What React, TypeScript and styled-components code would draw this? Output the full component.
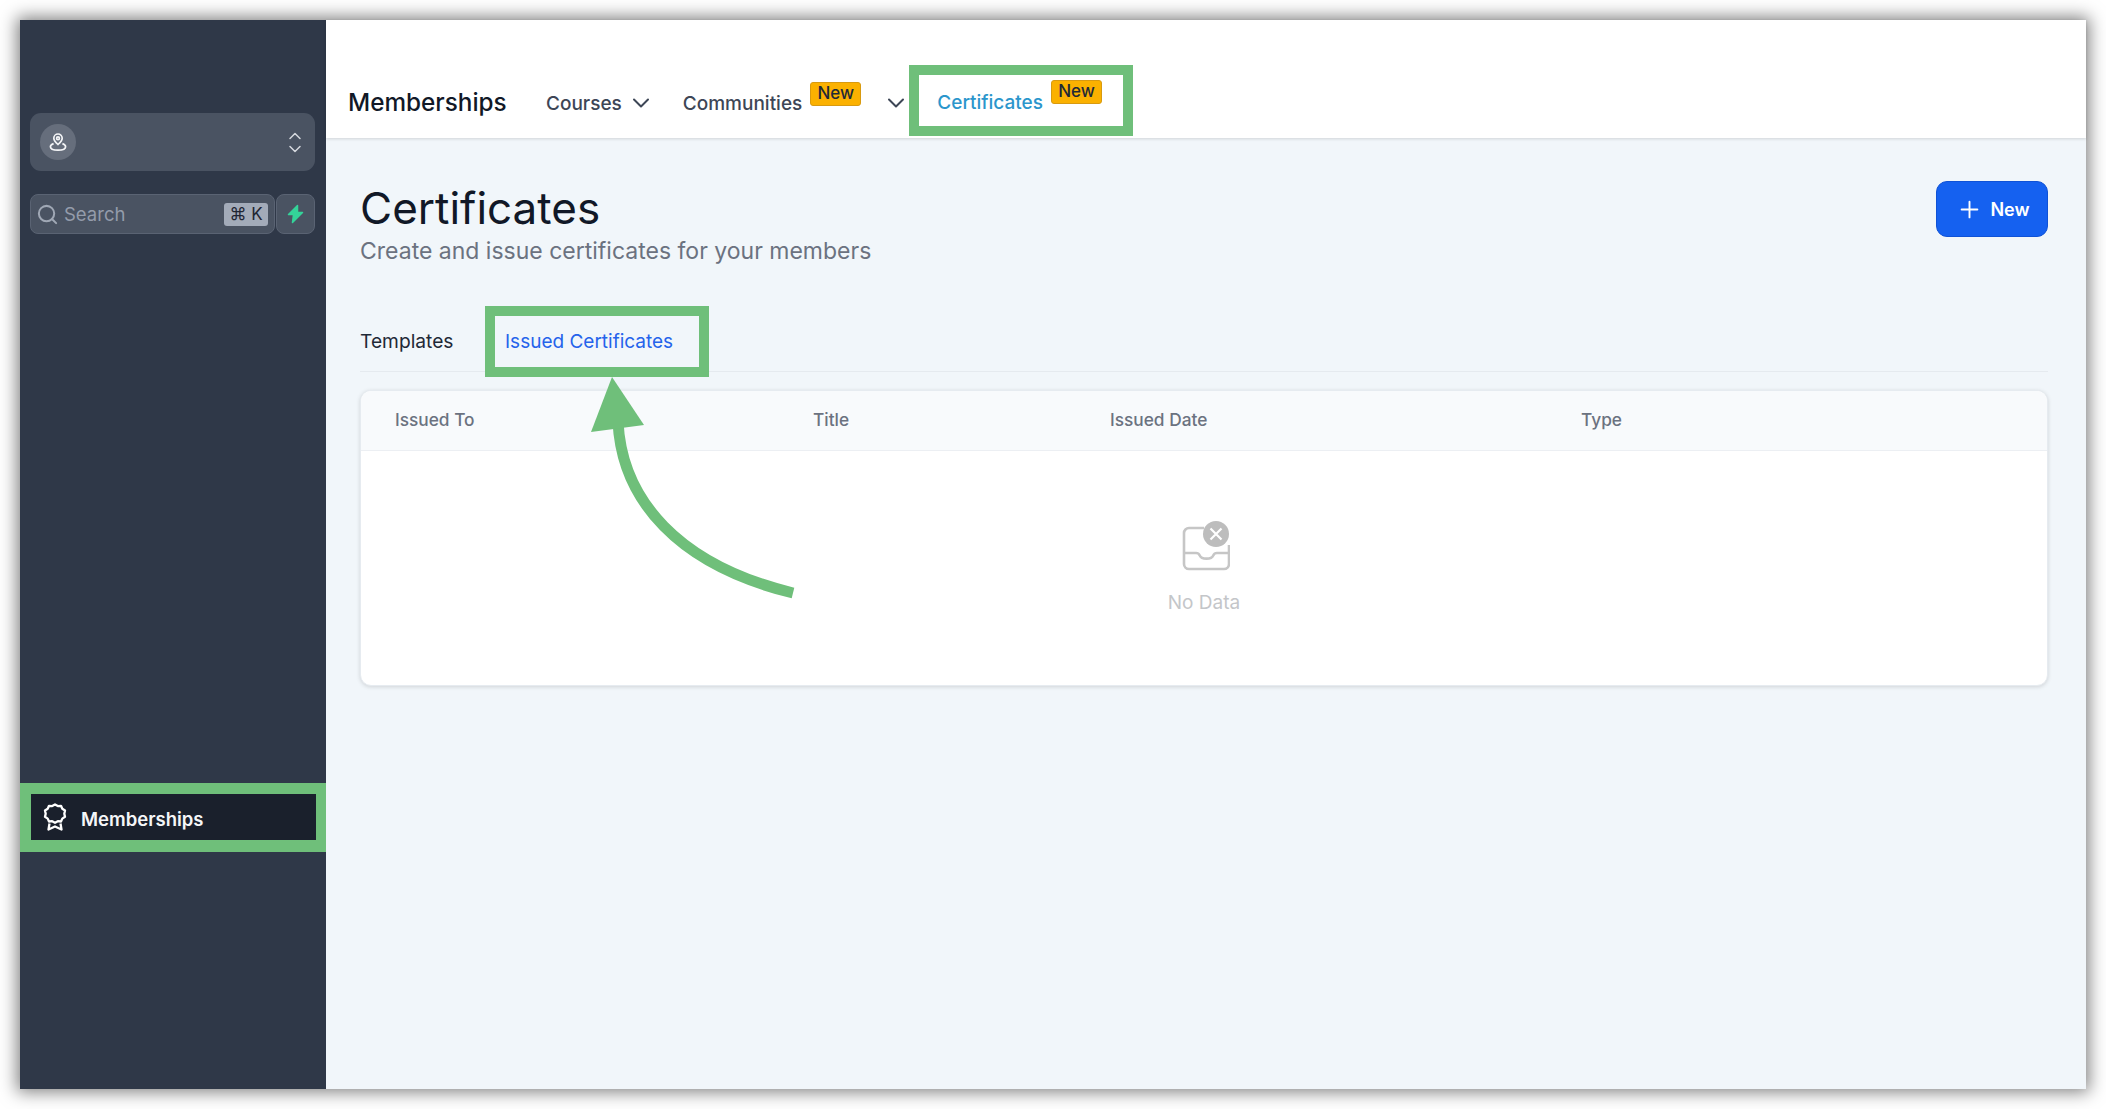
import React from 'react';
import styled, { createGlobalStyle } from 'styled-components';
import { ChevronDown, ChevronUp, Plus, Search } from 'lucide-react';

const GREEN = '#6fbf7a';

const GlobalStyle = createGlobalStyle`
  html, body {
    margin: 0;
    background: #ffffff;
    font-family: Inter, "Liberation Sans", sans-serif;
  }
  * {
    box-sizing: border-box;
  }
`;

const App = () => {
  return (
    <Screen>
      <GlobalStyle />
      <Window>
        <Sidebar>
          <Workspace>
            <Avatar>
              <svg width="22" height="22" viewBox="0 0 22 22" fill="none" stroke="#f4f5f7" strokeWidth="1.7">
                <path d="M11 13.5c-2.6-2.4-4.2-4.2-4.2-6.3a4.2 4.2 0 0 1 8.4 0c0 2.1-1.6 3.9-4.2 6.3z" />
                <circle cx="11" cy="7.2" r="1.4" />
                <path d="M6.6 12.6C4.4 13.4 3.4 14.5 3.4 15.8c0 2 3.4 3.4 7.6 3.4s7.6-1.4 7.6-3.4c0-1.3-1-2.4-3.2-3.2" />
              </svg>
            </Avatar>
            <Stepper>
              <ChevronUp size={20} strokeWidth={1.8} />
              <ChevronDown size={20} strokeWidth={1.8} />
            </Stepper>
          </Workspace>
          <SearchRow>
            <SearchBox>
              <Search size={23} strokeWidth={2.1} color="#a0a8b5" />
              <SearchText>Search</SearchText>
              <Kbd>⌘ K</Kbd>
            </SearchBox>
            <BoltButton>
              <svg width="17" height="20" viewBox="0 0 17 20" fill="#34d399" stroke="#34d399" strokeWidth="1.5" strokeLinejoin="round">
                <path d="M10.5 1.5 1.5 10.5h5L5.5 18.5 15.5 8.5h-5z" />
              </svg>
            </BoltButton>
          </SearchRow>
          <SideHighlight>
            <SideItem>
              <svg width="24" height="28" viewBox="0 0 24 28" fill="none" stroke="#ffffff" strokeWidth="2.3" strokeLinejoin="round">
                <path d="M12 1.5l2.8 1.6 3.2-.3 1.3 2.9 2.7 1.8-.7 3.2.7 3.1-2.7 1.8-1.3 2.9-3.2-.3-2.8 1.6-2.8-1.6-3.2.3-1.3-2.9-2.7-1.8.7-3.1-.7-3.2 2.7-1.8 1.3-2.9 3.2.3z" />
                <path d="M6.5 20.5 5.5 26.5l6.5-3 6.5 3-1-6" />
              </svg>
              <SideLabel>Memberships</SideLabel>
            </SideItem>
          </SideHighlight>
        </Sidebar>

        <Main>
          <TopBar>
            <Brand>Memberships</Brand>
            <NavItem $gap={5} $after={28}>
              Courses
              <ChevronDown size={28} strokeWidth={1.7} />
            </NavItem>
            <NavItem $gap={8} $after={-1}>
              Communities
              <Badge>New</Badge>
              <NavChevron>
                <ChevronDown size={28} strokeWidth={1.7} />
              </NavChevron>
            </NavItem>
            <ActiveNav>
              Certificates
              <Badge>New</Badge>
            </ActiveNav>
          </TopBar>

          <Page>
            <PageHead>
              <div>
                <Title>Certificates</Title>
                <Subtitle>Create and issue certificates for your members</Subtitle>
              </div>
              <NewButton>
                <Plus size={27} strokeWidth={1.7} />
                New
              </NewButton>
            </PageHead>

            <Tabs>
              <Tab>Templates</Tab>
              <ActiveTab>Issued Certificates</ActiveTab>
            </Tabs>

            <Card>
              <TableHead>
                <span>Issued To</span>
                <span>Title</span>
                <span>Issued Date</span>
                <span>Type</span>
              </TableHead>
              <Empty>
                <EmptyIcon width="48" height="50" viewBox="0 0 48 50" fill="none">
                  <path
                    d="M22 7H7a5 5 0 0 0-5 5v31a5 5 0 0 0 5 5h35a5 5 0 0 0 5-5V24M2 32h12c2 0 3 .8 3.6 2.2.9 2.2 3.2 3.4 6.9 3.4s6-1.2 6.9-3.4c.6-1.4 1.6-2.2 3.6-2.2H47"
                    stroke="#c6c6c6"
                    strokeWidth="2.6"
                  />
                  <circle cx="34" cy="13" r="13" fill="#bdbdbd" />
                  <path d="M28.5 7.5l11 11m0-11l-11 11" stroke="#ffffff" strokeWidth="2.2" />
                </EmptyIcon>
                <EmptyText>No Data</EmptyText>
              </Empty>
            </Card>
          </Page>
        </Main>

        <Arrow width="230" height="230" viewBox="0 0 230 230" fill="none">
          <path d="M38 52C42 130 98 195 213 223" stroke={GREEN} strokeWidth="11" />
          <path d="M32 7 11 62 64 55z" fill={GREEN} />
        </Arrow>
      </Window>
    </Screen>
  );
};

export default App;

const Screen = styled.div`
  width: 2106px;
  height: 1109px;
  padding: 20px;
  overflow: hidden;
`;

const Window = styled.div`
  position: relative;
  display: flex;
  width: 2066px;
  height: 1069px;
  background: #f1f6fa;
  box-shadow: 0 0 16px 3px rgba(0, 0, 0, 0.5);
`;

const Sidebar = styled.aside`
  display: flex;
  flex-direction: column;
  flex: none;
  width: 306px;
  padding-top: 93px;
  background: #2f3848;
`;

const Workspace = styled.div`
  display: flex;
  align-items: center;
  justify-content: space-between;
  height: 58px;
  margin: 0 11px 0 10px;
  padding: 0 10px;
  border-radius: 11px;
  background: #4a5362;
`;

const Avatar = styled.div`
  display: flex;
  align-items: center;
  justify-content: center;
  width: 36px;
  height: 36px;
  border-radius: 50%;
  background: #666e7c;
`;

const Stepper = styled.div`
  display: flex;
  flex-direction: column;
  color: #d5d8de;
  line-height: 0;

  svg {
    margin: -3.5px 0;
  }
`;

const SearchRow = styled.div`
  display: flex;
  gap: 1px;
  height: 40px;
  margin: 23px 11px 0 10px;
`;

const SearchBox = styled.div`
  display: flex;
  align-items: center;
  flex: 1;
  padding: 0 6px 0 5px;
  border: 1px solid #5a6373;
  border-radius: 8px;
  background: #4a5362;
`;

const SearchText = styled.span`
  margin-left: 5px;
  font-size: 18.5px;
  color: #949cab;
`;

const Kbd = styled.span`
  margin-left: auto;
  width: 44px;
  height: 23px;
  border-radius: 3px;
  background: #a3abb9;
  color: #1f2633;
  font-family: Inter, "DejaVu Sans", sans-serif;
  font-size: 17px;
  line-height: 23px;
  text-align: center;
`;

const BoltButton = styled.div`
  display: flex;
  align-items: center;
  justify-content: center;
  width: 39px;
  border: 1px solid #5a6373;
  border-radius: 8px;
  background: #4a5362;
`;

const SideHighlight = styled.div`
  height: 69px;
  margin-top: 549px;
  padding: 11px 10px 12px 11px;
  background: ${GREEN};
`;

const SideItem = styled.div`
  display: flex;
  align-items: center;
  gap: 14px;
  height: 100%;
  padding-left: 12px;
  background: #1a202c;
`;

const SideLabel = styled.span`
  padding-top: 3px;
  font-size: 18.5px;
  font-weight: 600;
  color: #f5f6f8;
`;

const Main = styled.main`
  display: flex;
  flex-direction: column;
  flex: 1;
  min-width: 0;
`;

const TopBar = styled.header`
  display: flex;
  align-items: center;
  height: 118px;
  padding: 42px 0 0 22px;
  background: #ffffff;
  box-shadow: 0 1px 3px rgba(0, 0, 0, 0.14);
`;

const Brand = styled.div`
  width: 198px;
  padding-top: 4px;
  font-size: 24.3px;
  font-weight: 500;
  color: #111827;
`;

const NavItem = styled.div<{ $gap: number; $after: number }>`
  display: flex;
  align-items: center;
  gap: ${(p) => p.$gap}px;
  margin-right: ${(p) => p.$after}px;
  padding-top: 6px;
  font-size: 19px;
  font-weight: 500;
  color: #3d4656;
`;

const NavChevron = styled.span`
  display: flex;
  margin-left: 13px;
`;

const Badge = styled.span`
  width: 51px;
  height: 24px;
  border: 1px solid #d89a10;
  border-radius: 3px;
  background: #fbb100;
  color: #1f2937;
  font-size: 17px;
  font-weight: 500;
  line-height: 21px;
  text-align: center;
  transform: translateY(-9px);
`;

const ActiveNav = styled.div`
  display: flex;
  align-items: center;
  gap: 8px;
  height: 71px;
  padding: 4px 21px 0 18px;
  border: 10px solid ${GREEN};
  background: #ffffff;
  font-size: 19px;
  font-weight: 500;
  color: #2b96cc;

  ${Badge} {
    transform: translateY(-10px);
  }
`;

const Page = styled.div`
  flex: 1;
  padding: 42px 38px 0 34px;
`;

const PageHead = styled.div`
  display: flex;
  align-items: flex-start;
  justify-content: space-between;
`;

const Title = styled.h1`
  margin: 4px 0 0;
  font-size: 44px;
  font-weight: 400;
  line-height: 48px;
  color: #111827;
`;

const Subtitle = styled.p`
  margin: 4px 0 0;
  font-size: 23px;
  line-height: 30px;
  color: #6b7280;
`;

const NewButton = styled.button`
  display: flex;
  align-items: center;
  justify-content: center;
  gap: 7px;
  width: 112px;
  height: 56px;
  margin-top: 1px;
  padding: 0 0 0 2px;
  border: 1px solid #0f52d6;
  border-radius: 11px;
  background: #1561f0;
  color: #ffffff;
  font-family: inherit;
  font-size: 18px;
  font-weight: 600;
`;

const Tabs = styled.div`
  display: flex;
  align-items: center;
  height: 66px;
  margin-top: 40px;
  border-bottom: 1px solid #e5eaef;
`;

const Tab = styled.div`
  width: 125px;
  padding-top: 5px;
  font-size: 19.2px;
  color: #1f2937;
`;

const ActiveTab = styled.div`
  position: relative;
  z-index: 1;
  display: flex;
  align-items: center;
  height: 71px;
  margin-bottom: -5px;
  padding: 0 26px 0 10px;
  border: 10.5px solid ${GREEN};
  font-size: 19px;
  color: #2563eb;
`;

const Card = styled.section`
  height: 296px;
  margin-top: 18px;
  border: 1px solid #e6ebf0;
  border-radius: 11px;
  background: #ffffff;
  box-shadow: 0 1px 4px rgba(0, 0, 0, 0.14);
  overflow: hidden;
`;

const TableHead = styled.div`
  display: grid;
  grid-template-columns: 418px 297px 471px 1fr;
  align-items: center;
  height: 60px;
  padding: 0 0 2px 34px;
  border-bottom: 1px solid #eceff3;
  background: #f8fafc;
  color: #6b7280;
  font-size: 17.3px;
  font-weight: 500;
`;

const Empty = styled.div`
  display: flex;
  flex-direction: column;
  align-items: center;
  padding-top: 70px;
`;

const EmptyIcon = styled.svg`
  margin-left: 3px;
`;

const EmptyText = styled.div`
  margin-top: 20px;
  font-size: 19px;
  color: #c4c6c9;
`;

const Arrow = styled.svg`
  position: absolute;
  left: 560px;
  top: 350px;
  z-index: 2;
  pointer-events: none;
`;
